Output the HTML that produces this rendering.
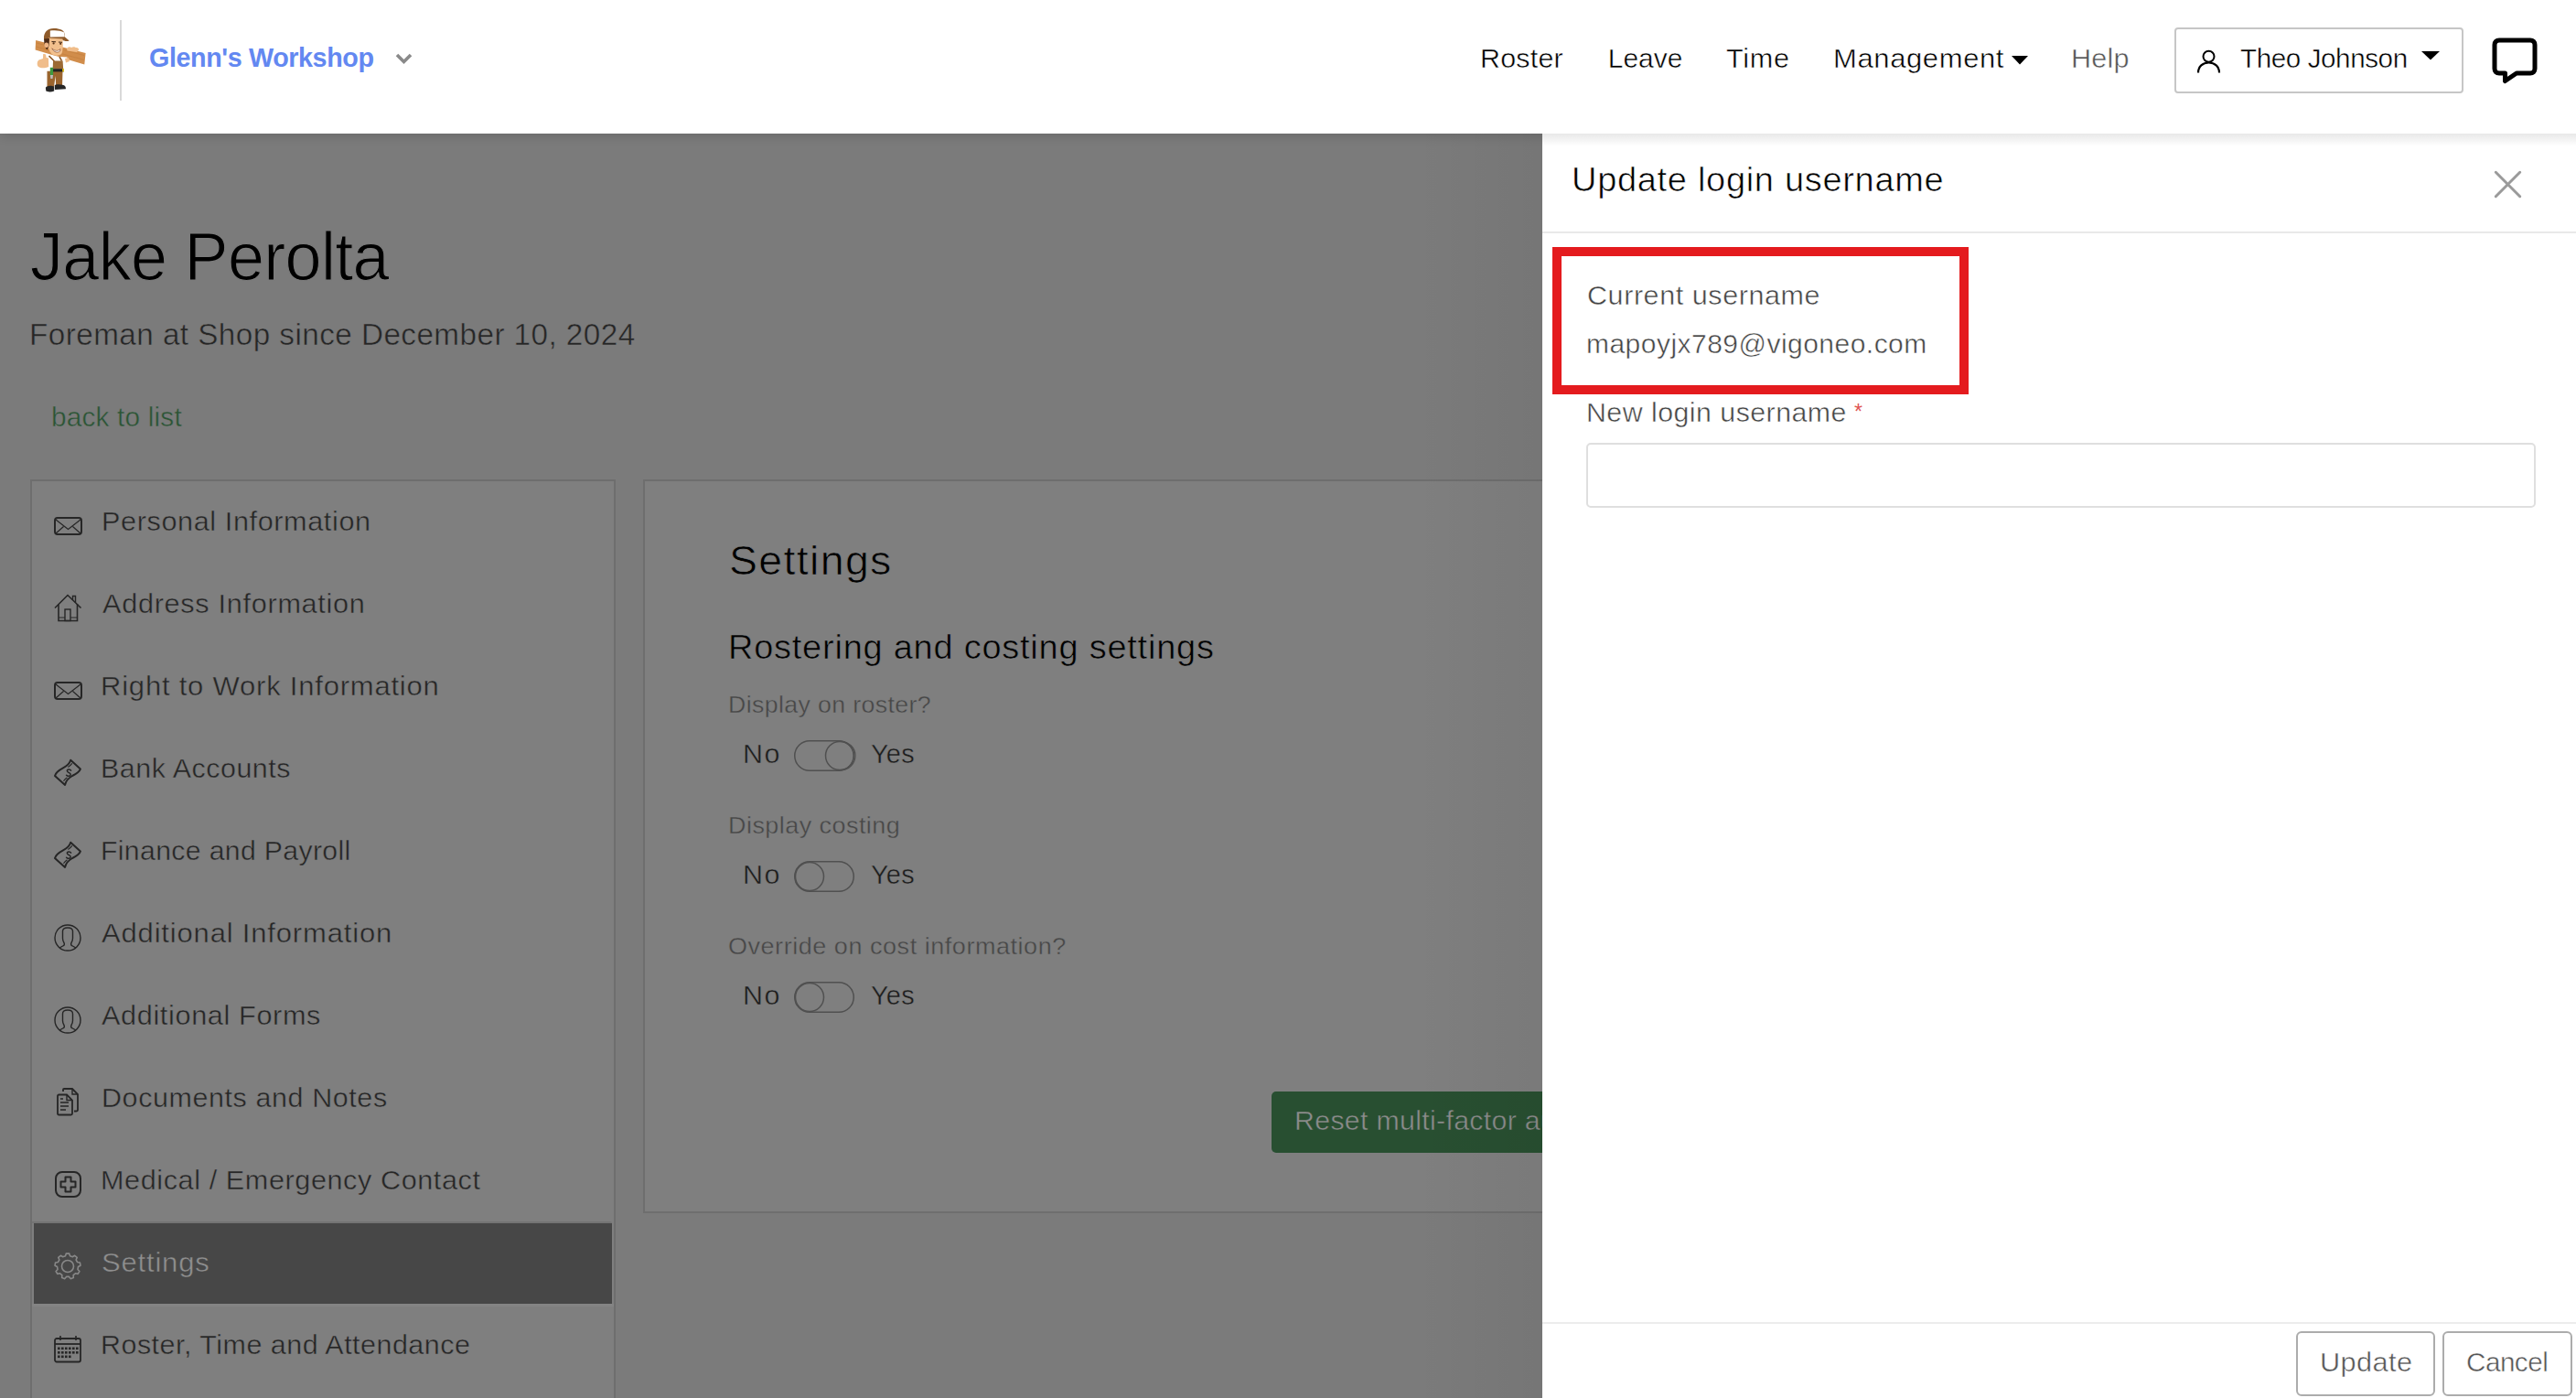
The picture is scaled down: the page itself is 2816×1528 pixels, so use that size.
<!DOCTYPE html>
<html><head><meta charset="utf-8"><title>Update login username</title>
<style>
*{margin:0;padding:0;box-sizing:border-box}
html,body{width:2816px;height:1528px;overflow:hidden;background:#7b7b7b;font-family:"Liberation Sans",sans-serif}
.t{position:absolute;white-space:nowrap;line-height:1}
.abs{position:absolute}
</style></head><body>

<div class="t" style="left:33.2px;top:245.0px;font-size:73.40px;letter-spacing:-0.70px;transform:scaleX(0.9808);transform-origin:0 0;color:#000;-webkit-text-stroke:1.17px #7b7b7b;">Jake Perolta</div>
<div class="t" style="left:32.0px;top:350.0px;font-size:32.41px;letter-spacing:0.44px;transform:scaleX(1.0260);transform-origin:0 0;color:#262626;-webkit-text-stroke:0.52px #7b7b7b;">Foreman at Shop since December 10, 2024</div>
<div class="t" style="left:56.4px;top:441.0px;font-size:29.36px;letter-spacing:0.18px;transform:scaleX(1.0145);transform-origin:0 0;color:#2b5535;-webkit-text-stroke:0.47px #7b7b7b;">back to list</div>
<div class="abs" style="left:33px;top:524px;width:640px;height:1100px;border:2px solid #6e6e6e;border-bottom:none;background:#7f7f7f"></div>
<div class="abs" style="left:37px;top:1337px;width:632px;height:88px;background:#474747"></div>
<div class="abs" style="left:35px;top:1335px;width:634px;height:2px;background:#747474;border-radius:0 2px 0 0"></div><div class="abs" style="left:35px;top:1425px;width:636px;height:3px;background:#848484"></div>
<div class="t" style="left:111.2px;top:555.0px;font-size:29.36px;letter-spacing:0.58px;transform:scaleX(1.0430);transform-origin:0 0;color:#262626;-webkit-text-stroke:0.47px #7f7f7f;">Personal Information</div>
<div class="t" style="left:111.6px;top:645.0px;font-size:29.36px;letter-spacing:0.67px;transform:scaleX(1.0440);transform-origin:0 0;color:#262626;-webkit-text-stroke:0.47px #7f7f7f;">Address Information</div>
<div class="t" style="left:109.8px;top:735.0px;font-size:29.36px;letter-spacing:0.73px;transform:scaleX(1.0571);transform-origin:0 0;color:#262626;-webkit-text-stroke:0.47px #7f7f7f;">Right to Work Information</div>
<div class="t" style="left:109.8px;top:825.0px;font-size:29.36px;letter-spacing:0.52px;transform:scaleX(1.0348);transform-origin:0 0;color:#262626;-webkit-text-stroke:0.47px #7f7f7f;">Bank Accounts</div>
<div class="t" style="left:109.8px;top:915.0px;font-size:29.36px;letter-spacing:0.35px;transform:scaleX(1.0280);transform-origin:0 0;color:#262626;-webkit-text-stroke:0.47px #7f7f7f;">Finance and Payroll</div>
<div class="t" style="left:111.4px;top:1005.0px;font-size:29.36px;letter-spacing:0.77px;transform:scaleX(1.0569);transform-origin:0 0;color:#262626;-webkit-text-stroke:0.47px #7f7f7f;">Additional Information</div>
<div class="t" style="left:111.4px;top:1095.0px;font-size:29.36px;letter-spacing:0.61px;transform:scaleX(1.0435);transform-origin:0 0;color:#262626;-webkit-text-stroke:0.47px #7f7f7f;">Additional Forms</div>
<div class="t" style="left:110.8px;top:1185.0px;font-size:29.36px;letter-spacing:0.56px;transform:scaleX(1.0385);transform-origin:0 0;color:#262626;-webkit-text-stroke:0.47px #7f7f7f;">Documents and Notes</div>
<div class="t" style="left:110.0px;top:1275.0px;font-size:29.36px;letter-spacing:0.57px;transform:scaleX(1.0418);transform-origin:0 0;color:#262626;-webkit-text-stroke:0.47px #7f7f7f;">Medical / Emergency Contact</div>
<div class="t" style="left:111.0px;top:1365.0px;font-size:29.36px;letter-spacing:0.74px;transform:scaleX(1.0586);transform-origin:0 0;color:#8f8f8f;-webkit-text-stroke:0.47px #474747;">Settings</div>
<div class="t" style="left:110.0px;top:1455.0px;font-size:29.36px;letter-spacing:0.48px;transform:scaleX(1.0368);transform-origin:0 0;color:#262626;-webkit-text-stroke:0.47px #7f7f7f;">Roster, Time and Attendance</div>
<svg style="position:absolute;left:59px;top:564.5px;overflow:visible" width="31" height="20" viewBox="0 0 31 20"><rect x="1" y="1" width="29" height="18" rx="3" fill="none" stroke="#262626" stroke-width="2"/><path d="M2 3 L15.5 13.5 L29 3 M2 18 L10.5 10.5 M29 18 L20.5 10.5" fill="none" stroke="#262626" stroke-width="1.2"/></svg>
<svg style="position:absolute;left:59px;top:744.5px;overflow:visible" width="31" height="20" viewBox="0 0 31 20"><rect x="1" y="1" width="29" height="18" rx="3" fill="none" stroke="#262626" stroke-width="2"/><path d="M2 3 L15.5 13.5 L29 3 M2 18 L10.5 10.5 M29 18 L20.5 10.5" fill="none" stroke="#262626" stroke-width="1.2"/></svg>
<svg style="position:absolute;left:59px;top:649px;overflow:visible" width="30" height="31" viewBox="0 0 30 31"><path d="M1 15.5 L15 1.5 L29.5 15.5" fill="none" stroke="#262626" stroke-width="1.6"/><path d="M5 11.5 V29.5 H25.5 V11" fill="none" stroke="#262626" stroke-width="1.6"/><path d="M20.5 7 V2.5 H23.5 V9.5" fill="none" stroke="#262626" stroke-width="1.4"/><rect x="12" y="17" width="6" height="12.5" fill="none" stroke="#262626" stroke-width="1.4"/><path d="M5 26 H12 M18 26 H25.5" stroke="#262626" stroke-width="1.2"/></svg>
<svg style="position:absolute;left:59px;top:830px;overflow:visible" width="30" height="30" viewBox="0 0 30 30"><path d="M1 17.9 C2 14.2 5.5 11.8 10 9.4 C14 7.3 17 5 18.2 0.8 L28.9 10.4 C28 13.6 24.5 15.6 20 18 C16 20.3 13 23 12.1 27.9 Z" fill="none" stroke="#262626" stroke-width="2" stroke-linejoin="round"/><path d="M18.6 12.2 C17.6 10.4 14.2 10.6 14.4 12.8 C14.6 14.8 18.2 14.2 18.2 16.4 C18.2 18.4 15 18.8 13.6 17.2" fill="none" stroke="#262626" stroke-width="1.5" stroke-linecap="round"/><path d="M15.7 8.2 C17.3 7.2 18.6 6 19.6 4.7 M10.7 23.3 C11.7 22 12.8 20.9 14.2 20" fill="none" stroke="#262626" stroke-width="1.1" stroke-linecap="round"/></svg>
<svg style="position:absolute;left:59px;top:920px;overflow:visible" width="30" height="30" viewBox="0 0 30 30"><path d="M1 17.9 C2 14.2 5.5 11.8 10 9.4 C14 7.3 17 5 18.2 0.8 L28.9 10.4 C28 13.6 24.5 15.6 20 18 C16 20.3 13 23 12.1 27.9 Z" fill="none" stroke="#262626" stroke-width="2" stroke-linejoin="round"/><path d="M18.6 12.2 C17.6 10.4 14.2 10.6 14.4 12.8 C14.6 14.8 18.2 14.2 18.2 16.4 C18.2 18.4 15 18.8 13.6 17.2" fill="none" stroke="#262626" stroke-width="1.5" stroke-linecap="round"/><path d="M15.7 8.2 C17.3 7.2 18.6 6 19.6 4.7 M10.7 23.3 C11.7 22 12.8 20.9 14.2 20" fill="none" stroke="#262626" stroke-width="1.1" stroke-linecap="round"/></svg>
<svg style="position:absolute;left:59px;top:1009.5px;overflow:visible" width="30" height="30" viewBox="0 0 30 30"><circle cx="15" cy="15" r="14" fill="none" stroke="#262626" stroke-width="1.4"/><path d="M6 26 L10.5 23.5 C11.5 23 11.5 21.5 11 20.5 C10 19 9.5 17.5 9.5 15.5 L9.5 8 C9.5 5.5 12 4 15 4 C18 4 20.5 5.5 20.5 8 L20.5 15.5 C20.5 17.5 20 19 19 20.5 C18.5 21.5 18.5 23 19.5 23.5 L24 26" fill="none" stroke="#262626" stroke-width="1.4"/></svg>
<svg style="position:absolute;left:59px;top:1099.5px;overflow:visible" width="30" height="30" viewBox="0 0 30 30"><circle cx="15" cy="15" r="14" fill="none" stroke="#262626" stroke-width="1.4"/><path d="M6 26 L10.5 23.5 C11.5 23 11.5 21.5 11 20.5 C10 19 9.5 17.5 9.5 15.5 L9.5 8 C9.5 5.5 12 4 15 4 C18 4 20.5 5.5 20.5 8 L20.5 15.5 C20.5 17.5 20 19 19 20.5 C18.5 21.5 18.5 23 19.5 23.5 L24 26" fill="none" stroke="#262626" stroke-width="1.4"/></svg>
<svg style="position:absolute;left:62px;top:1189px;overflow:visible" width="25" height="31" viewBox="0 0 25 31"><path d="M7 4 V2 C7 1.5 7.5 1 8 1 H17 L23 7 V24 C23 25 22 25.5 21 25.5 H19" fill="none" stroke="#262626" stroke-width="1.8"/><path d="M17 1 V7 H23" fill="none" stroke="#262626" stroke-width="1.4"/><path d="M1 9 C1 8 1.5 7.5 2.5 7.5 H11 L17 13.5 V28 C17 29 16.5 29.5 15.5 29.5 H2.5 C1.5 29.5 1 29 1 28 Z" fill="none" stroke="#262626" stroke-width="1.8"/><path d="M11 7.5 V13.5 H17" fill="none" stroke="#262626" stroke-width="1.4"/><path d="M4 12 H7 M4 16 H13 M4 20 H13 M4 24 H10" stroke="#262626" stroke-width="1.6"/></svg>
<svg style="position:absolute;left:60px;top:1280px;overflow:visible" width="29" height="29" viewBox="0 0 29 29"><rect x="1" y="1" width="27" height="27" rx="7" fill="none" stroke="#262626" stroke-width="2"/><path d="M11.5 6.5 H17.5 V11.5 H22.5 V17.5 H17.5 V22.5 H11.5 V17.5 H6.5 V11.5 H11.5 Z" fill="none" stroke="#262626" stroke-width="2" stroke-linejoin="round"/></svg>
<svg style="position:absolute;left:59px;top:1368.5px;overflow:visible" width="30" height="30" viewBox="0 0 30 30"><path d="M12.49 3.78 L13.32 1.10 L16.68 1.10 L17.51 3.78 L20.29 4.79 L22.65 3.28 L25.22 5.43 L24.14 8.02 L25.62 10.58 L28.40 10.94 L28.98 14.24 L26.49 15.52 L25.97 18.44 L27.88 20.50 L26.20 23.40 L23.46 22.78 L21.20 24.69 L21.33 27.49 L18.18 28.63 L16.48 26.40 L13.52 26.40 L11.82 28.63 L8.67 27.49 L8.80 24.69 L6.54 22.78 L3.80 23.40 L2.12 20.50 L4.03 18.44 L3.51 15.52 L1.02 14.24 L1.60 10.94 L4.38 10.58 L5.86 8.02 L4.78 5.43 L7.35 3.28 L9.71 4.79 Z" fill="none" stroke="#888888" stroke-width="1.6" stroke-linejoin="round"/><circle cx="15" cy="15" r="6.5" fill="none" stroke="#888888" stroke-width="1.6"/></svg>
<svg style="position:absolute;left:59px;top:1459.5px;overflow:visible" width="30" height="30" viewBox="0 0 30 30"><rect x="1" y="3" width="28" height="25.5" rx="2" fill="none" stroke="#262626" stroke-width="1.8"/><path d="M1 9 H29" stroke="#262626" stroke-width="1.8"/><path d="M7 0 V5 M24 0 V5" stroke="#262626" stroke-width="1.6"/><rect x="4" y="12.5" width="2.6" height="2.6" fill="#262626"/><rect x="8" y="12.5" width="2.6" height="2.6" fill="#262626"/><rect x="12" y="12.5" width="2.6" height="2.6" fill="#262626"/><rect x="16" y="12.5" width="2.6" height="2.6" fill="#262626"/><rect x="20" y="12.5" width="2.6" height="2.6" fill="#262626"/><rect x="24" y="12.5" width="2.6" height="2.6" fill="#262626"/><rect x="4" y="17.0" width="2.6" height="2.6" fill="#262626"/><rect x="8" y="17.0" width="2.6" height="2.6" fill="#262626"/><rect x="12" y="17.0" width="2.6" height="2.6" fill="#262626"/><rect x="16" y="17.0" width="2.6" height="2.6" fill="#262626"/><rect x="20" y="17.0" width="2.6" height="2.6" fill="#262626"/><rect x="24" y="17.0" width="2.6" height="2.6" fill="#262626"/><rect x="4" y="21.5" width="2.6" height="2.6" fill="#262626"/><rect x="8" y="21.5" width="2.6" height="2.6" fill="#262626"/><rect x="12" y="21.5" width="2.6" height="2.6" fill="#262626"/><rect x="16" y="21.5" width="2.6" height="2.6" fill="#262626"/></svg>
<div class="abs" style="left:703px;top:524px;width:1201px;height:802px;border:2px solid #6e6e6e;background:#7f7f7f"></div>
<div class="t" style="left:796.6px;top:591.0px;font-size:43.90px;letter-spacing:1.28px;transform:scaleX(1.0581);transform-origin:0 0;color:#000;-webkit-text-stroke:0.70px #7f7f7f;">Settings</div>
<div class="t" style="left:795.6px;top:690.0px;font-size:36.34px;letter-spacing:0.76px;transform:scaleX(1.0435);transform-origin:0 0;color:#000;-webkit-text-stroke:0.58px #7f7f7f;">Rostering and costing settings</div>
<div class="t" style="left:795.8px;top:758.0px;font-size:25.87px;letter-spacing:0.37px;transform:scaleX(1.0324);transform-origin:0 0;color:#474747;-webkit-text-stroke:0.41px #7f7f7f;">Display on roster?</div>
<div class="t" style="left:795.8px;top:890.0px;font-size:25.87px;letter-spacing:0.45px;transform:scaleX(1.0418);transform-origin:0 0;color:#474747;-webkit-text-stroke:0.41px #7f7f7f;">Display costing</div>
<div class="t" style="left:796.4px;top:1022.0px;font-size:25.87px;letter-spacing:0.53px;transform:scaleX(1.0428);transform-origin:0 0;color:#474747;-webkit-text-stroke:0.41px #7f7f7f;">Override on cost information?</div>
<div class="t" style="left:812.0px;top:809.0px;font-size:29.36px;letter-spacing:1.45px;transform:scaleX(1.0357);transform-origin:0 0;color:#1c1c1c;-webkit-text-stroke:0.47px #7f7f7f;">No</div>
<div class="t" style="left:951.6px;top:809.0px;font-size:29.36px;letter-spacing:0.25px;transform:scaleX(0.9839);transform-origin:0 0;color:#1c1c1c;-webkit-text-stroke:0.47px #7f7f7f;">Yes</div>
<div class="t" style="left:812.0px;top:941.0px;font-size:29.36px;letter-spacing:1.45px;transform:scaleX(1.0357);transform-origin:0 0;color:#1c1c1c;-webkit-text-stroke:0.47px #7f7f7f;">No</div>
<div class="t" style="left:951.6px;top:941.0px;font-size:29.36px;letter-spacing:0.25px;transform:scaleX(0.9839);transform-origin:0 0;color:#1c1c1c;-webkit-text-stroke:0.47px #7f7f7f;">Yes</div>
<div class="t" style="left:812.0px;top:1073.0px;font-size:29.36px;letter-spacing:1.45px;transform:scaleX(1.0357);transform-origin:0 0;color:#1c1c1c;-webkit-text-stroke:0.47px #7f7f7f;">No</div>
<div class="t" style="left:951.6px;top:1073.0px;font-size:29.36px;letter-spacing:0.25px;transform:scaleX(0.9839);transform-origin:0 0;color:#1c1c1c;-webkit-text-stroke:0.47px #7f7f7f;">Yes</div>
<svg style="position:absolute;left:868px;top:809px;overflow:visible" width="66" height="34" viewBox="0 0 66 34"><rect x="0.75" y="0.75" width="64.5" height="32.5" rx="16.25" fill="none" stroke="#505050" stroke-width="1.5"/><circle cx="50" cy="17" r="15.5" fill="none" stroke="#505050" stroke-width="1.5"/><path d="M50 1.5 A15.5 15.5 0 0 1 50 32.5" fill="none" stroke="#505050" stroke-width="1.2" transform="translate(1.5 0)"/></svg>
<svg style="position:absolute;left:868px;top:941px;overflow:visible" width="66" height="34" viewBox="0 0 66 34"><rect x="0.75" y="0.75" width="64.5" height="32.5" rx="16.25" fill="none" stroke="#505050" stroke-width="1.5"/><circle cx="17" cy="17" r="15.5" fill="none" stroke="#505050" stroke-width="1.5"/></svg>
<svg style="position:absolute;left:868px;top:1073px;overflow:visible" width="66" height="34" viewBox="0 0 66 34"><rect x="0.75" y="0.75" width="64.5" height="32.5" rx="16.25" fill="none" stroke="#505050" stroke-width="1.5"/><circle cx="17" cy="17" r="15.5" fill="none" stroke="#505050" stroke-width="1.5"/></svg>
<div class="abs" style="left:1390px;top:1193px;width:400px;height:67px;background:#284f31;border-radius:5px"></div>
<div class="t" style="left:1414.6px;top:1210.0px;font-size:29.65px;letter-spacing:0.29px;transform:scaleX(1.0236);transform-origin:0 0;color:#8c8c8c;-webkit-text-stroke:0.47px #284f31;">Reset multi-factor authentication</div>
<div class="abs" style="left:1546px;top:146px;width:140px;height:1382px;background:linear-gradient(to right,rgba(0,0,0,0),rgba(0,0,0,.045))"></div>
<div class="abs" style="left:0;top:0;width:2816px;height:146px;background:#fff;box-shadow:0 2px 12px rgba(0,0,0,.16)"></div>
<svg style="position:absolute;left:35px;top:27px;overflow:visible" width="64" height="77" viewBox="0 0 64 77">
<path d="M4.1 17.1 L58.6 31.1 L57.3 43.5 L3.6 27.5 Z" fill="#d18d4b"/>
<path d="M5 20 L57 33.5 M4.5 24 L57 38.5" stroke="#b97535" stroke-width="0.7" opacity=".55"/>
<path d="M13 16 C12.5 8 17 4.2 23.7 4.1 C30 4 35.5 6 36 11 L36 13.5 L40.7 17.5 C38 18.5 35 18 33 16.5 L14 17.5 Z" fill="#8e5a2a"/>
<path d="M19.8 6.6 C25 5.6 31 6.3 35.3 8.5 L35.8 13.2 L19.8 13.6 Z" fill="#fff"/>
<path d="M18 14.5 L33.5 15.5 C34 22 33.8 28 32.5 31.5 C30 34 25 34.5 21.5 32 C18.5 29 17.5 24 17.5 20 Z" fill="#f2c08d"/>
<path d="M13.2 15.4 L19 15 L18.5 23 L16.5 27.5 C14 25 13 20 13.2 15.4 Z" fill="#4a2a16"/>
<ellipse cx="15.8" cy="22.2" rx="2.3" ry="2.8" fill="#eeb585"/>
<path d="M21.5 18.5 L26 18.8 M29 19 L33 19.3" stroke="#3a2414" stroke-width="1"/>
<circle cx="23.6" cy="20.4" r="1.1" fill="#5a3418"/><circle cx="31.2" cy="20.8" r="1.1" fill="#5a3418"/>
<path d="M21.8 25.8 C24 28.5 28.5 29.5 31 26.5 L30.6 29 C28 31 24 30.5 21.8 25.8 Z" fill="#fff" stroke="#7a3d1c" stroke-width="0.6"/>
<path d="M38 26.5 C39 24 41.5 23.8 43 25 C44.5 23.8 47 24 48 25.2 C49.5 24.8 51.2 25.8 51.2 27.5 L49 30 L38.5 28.5 Z" fill="#f0bd8a"/>
<path d="M16.5 34 L38.5 35.5 L38.5 41.9 L34 43 L22 43 L16.5 41 Z" fill="#fff"/>
<path d="M36 37 L40 36 L41 40 L37 41.5 Z" fill="#f0bd8a"/>
<path d="M18.5 34.2 L24.5 40 M30 35 L32.5 39.6" stroke="#8e5a2a" stroke-width="1.6"/>
<path d="M23.1 39.6 L33.6 39.6 L34.2 48.5 L22.6 48.5 Z" fill="#9c6a34"/>
<path d="M16.5 50.7 L33.5 50.7 L33 67.2 L26.2 67.5 L25.6 56 L24 68.3 L16.5 68.3 Z" fill="#9a642e"/>
<path d="M22.6 48.2 L34.7 48.2 L34.7 51.4 L22.6 51.4 Z" fill="#222"/>
<rect x="33.2" y="48" width="1.8" height="3.4" fill="#e3c21a"/>
<path d="M19.8 46.8 L23.1 46.8 L23.1 55.1 L19.8 55.1 Z" fill="#3c9a3f"/>
<path d="M20 55 L23 55 L22.5 59 L20.3 59 Z" fill="#bdbdbd"/>
<path d="M12.1 33 C11.5 32 13.8 31.5 15 32.5 L15.6 36 L18 36.5 L18.2 46 C15 47.5 9.5 48 7 46 C5 44 5.5 40 7.5 38.5 L12 37 Z" fill="#f0bd8a"/>
<path d="M14.9 69 C15 67.5 18 66.5 21 66.8 L24.2 67.5 L24.2 72.5 C21 73.8 17 73.6 15.3 72.6 Z" fill="#262626"/>
<path d="M24.8 66 C26 65 31 65 34.5 66 C36.5 66.8 37 68.5 36.9 70.2 L25 71 Z" fill="#262626"/>
</svg>
<div class="abs" style="left:131px;top:22px;width:2px;height:88px;background:#d9d9d9"></div>
<div class="t" style="left:162.8px;top:48.0px;font-size:29.36px;letter-spacing:-0.41px;transform:scaleX(0.9782);transform-origin:0 0;color:#6388f1;font-weight:bold;">Glenn's Workshop</div>
<svg style="position:absolute;left:432px;top:58px;overflow:visible" width="19" height="13" viewBox="0 0 19 13"><path d="M2 2 L9.5 9.5 L17 2" fill="none" stroke="#8a8a8a" stroke-width="3.6"/></svg>
<div class="t" style="left:1618.0px;top:49.0px;font-size:29.94px;letter-spacing:0.20px;transform:scaleX(1.0174);transform-origin:0 0;color:#000;-webkit-text-stroke:0.48px #fff;">Roster</div>
<div class="t" style="left:1757.8px;top:49.0px;font-size:29.94px;letter-spacing:0.00px;transform:scaleX(1.0000);transform-origin:0 0;color:#000;-webkit-text-stroke:0.48px #fff;">Leave</div>
<div class="t" style="left:1887.4px;top:49.0px;font-size:29.94px;letter-spacing:0.65px;transform:scaleX(1.0234);transform-origin:0 0;color:#000;-webkit-text-stroke:0.48px #fff;">Time</div>
<div class="t" style="left:2004.0px;top:49.0px;font-size:29.94px;letter-spacing:0.59px;transform:scaleX(1.0356);transform-origin:0 0;color:#000;-webkit-text-stroke:0.48px #fff;">Management</div>
<div class="t" style="left:2264.4px;top:49.0px;font-size:29.94px;letter-spacing:0.16px;transform:scaleX(1.0215);transform-origin:0 0;color:#555;-webkit-text-stroke:0.48px #fff;">Help</div>
<div class="t" style="left:2448.8px;top:49.0px;font-size:30.23px;letter-spacing:-0.42px;transform:scaleX(0.9799);transform-origin:0 0;color:#000;-webkit-text-stroke:0.48px #fff;">Theo Johnson</div>
<svg style="position:absolute;left:2199px;top:61px;overflow:visible" width="18" height="10" viewBox="0 0 18 10"><path d="M0 0 H18 L9 9.5 Z" fill="#000"/></svg>
<div class="abs" style="left:2377px;top:30px;width:316px;height:72px;border:2px solid #c6c6c6;border-radius:4px"></div>
<svg style="position:absolute;left:2402px;top:55px;overflow:visible" width="26" height="26" viewBox="0 0 26 26"><circle cx="12.5" cy="6.8" r="6" fill="none" stroke="#000" stroke-width="2"/><path d="M1 24.5 C1 17.5 6 13.5 12.5 13.5 C19 13.5 24 17.5 24 24.5" fill="none" stroke="#000" stroke-width="2.2"/></svg>
<svg style="position:absolute;left:2647px;top:56px;overflow:visible" width="20" height="10" viewBox="0 0 20 10"><path d="M0 0 H20 L10 9.5 Z" fill="#000"/></svg>
<svg style="position:absolute;left:2724px;top:41px;overflow:visible" width="50" height="50" viewBox="0 0 50 50"><path d="M8 3 H42 C45 3 47 5 47 8 V34 C47 37 45 39 42 39 H27 L14.5 47.5 L14.5 39 H8 C5 39 3 37 3 34 V8 C3 5 5 3 8 3 Z" fill="none" stroke="#000" stroke-width="5" stroke-linejoin="round"/></svg>
<div class="abs" style="left:1686px;top:146px;width:1130px;height:1382px;background:#fff"></div>
<div class="abs" style="left:1686px;top:146px;width:1130px;height:14px;background:linear-gradient(to bottom,rgba(0,0,0,.09),rgba(0,0,0,0))"></div>
<div class="t" style="left:1718.0px;top:179.0px;font-size:36.63px;letter-spacing:0.68px;transform:scaleX(1.0367);transform-origin:0 0;color:#000;-webkit-text-stroke:0.59px #fff;">Update login username</div>
<svg style="position:absolute;left:2726px;top:186px;overflow:visible" width="31" height="31" viewBox="0 0 31 31"><path d="M2.3 2.3 L28.7 28.7 M28.7 2.3 L2.3 28.7" stroke="#9a9a9a" stroke-width="3" stroke-linecap="round"/></svg>
<div class="abs" style="left:1686px;top:253px;width:1130px;height:2px;background:#e9e9e9"></div>
<div class="abs" style="left:1697px;top:270px;width:455px;height:161px;border:10px solid #e41b1e"></div>
<div class="t" style="left:1734.6px;top:308.0px;font-size:29.51px;letter-spacing:0.55px;transform:scaleX(1.0344);transform-origin:0 0;color:#444;-webkit-text-stroke:0.47px #fff;">Current username</div>
<div class="t" style="left:1733.6px;top:362.0px;font-size:29.22px;letter-spacing:0.46px;transform:scaleX(1.0268);transform-origin:0 0;color:#444;-webkit-text-stroke:0.47px #fff;">mapoyjx789@vigoneo.com</div>
<div class="t" style="left:1733.6px;top:436.0px;font-size:29.51px;letter-spacing:0.46px;transform:scaleX(1.0278);transform-origin:0 0;color:#444;-webkit-text-stroke:0.47px #fff;">New login username</div>
<div class="t" style="left:2027px;top:439px;font-size:23px;color:#e05555">*</div>
<div class="abs" style="left:1734px;top:484px;width:1038px;height:71px;border:2px solid #dfdfdf;border-radius:5px"></div>
<div class="abs" style="left:1686px;top:1445px;width:1130px;height:2px;background:#ececec"></div>
<div class="abs" style="left:2510px;top:1455px;width:152px;height:71px;border:2px solid #acacac;border-radius:6px"></div>
<div class="abs" style="left:2670px;top:1455px;width:142px;height:71px;border:2px solid #acacac;border-radius:6px"></div>
<div class="t" style="left:2536.0px;top:1474.0px;font-size:30.23px;letter-spacing:0.39px;transform:scaleX(1.0157);transform-origin:0 0;color:#555;-webkit-text-stroke:0.48px #fff;">Update</div>
<div class="t" style="left:2696.0px;top:1474.0px;font-size:30.23px;letter-spacing:-0.51px;transform:scaleX(0.9805);transform-origin:0 0;color:#555;-webkit-text-stroke:0.48px #fff;">Cancel</div>
</body></html>
